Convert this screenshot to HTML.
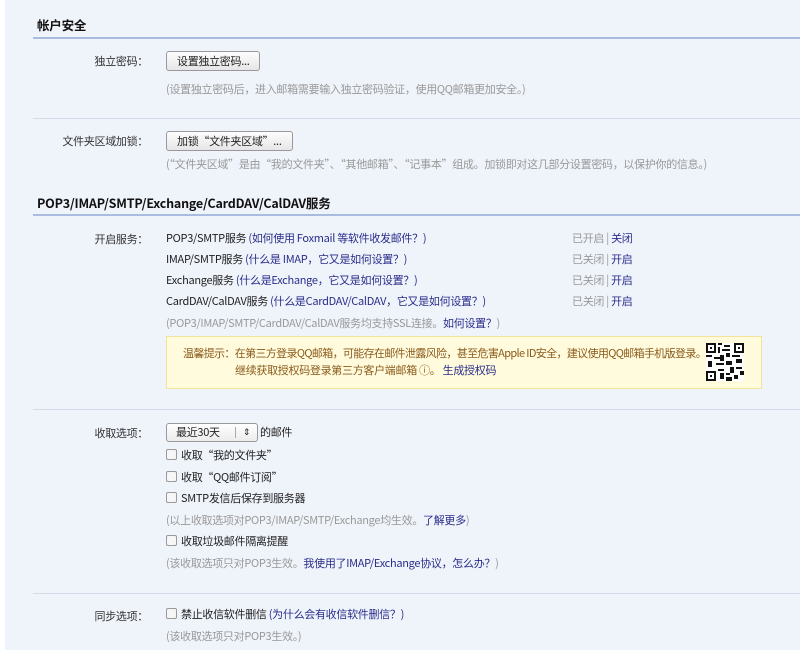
<!DOCTYPE html>
<html><head><meta charset="utf-8"><style>
*{margin:0;padding:0;box-sizing:border-box}
body{width:800px;height:650px;background:#eff3fa;font-family:"Noto Sans CJK SC","Liberation Sans",sans-serif;font-size:11px;letter-spacing:-0.3px;color:#222;position:relative;overflow:hidden}
.strip{position:absolute;left:0;top:0;width:5px;height:650px;background:#fff}
.a{position:absolute;white-space:nowrap;line-height:16px}
.h{font-weight:bold;font-size:12.5px;color:#111;letter-spacing:-0.2px}
.bl{position:absolute;left:33px;right:0;height:2px;background:#a9bce0}
.sep{position:absolute;left:33px;right:0;height:1px;background:#d3dbe8}
.lab{position:absolute;right:652px;white-space:nowrap;line-height:16px;color:#333}
.btn{position:absolute;left:166px;height:20px;border:1px solid #999;border-radius:3px;background:linear-gradient(#fdfdfd,#e6e6e6);line-height:18px;padding:0 10px;color:#222}
.g{color:#999}
.l{color:#2a2d8a}
.cb{display:inline-block;width:11px;height:11px;border:1px solid #999;border-radius:2px;background:#f6f6f6;vertical-align:-1px;margin-right:4px}
.st{position:absolute;left:572px;line-height:16px;white-space:nowrap}
</style></head><body>
<div class="strip"></div>
<div class="a h" style="left:37px;top:17px">帐户安全</div>
<div class="bl" style="top:37px"></div>
<div class="lab" style="top:53px">独立密码：</div>
<div class="btn" style="top:51px">设置独立密码...</div>
<div class="a g" style="left:166px;top:81px">(设置独立密码后，进入邮箱需要输入独立密码验证，使用QQ邮箱更加安全。)</div>
<div class="sep" style="top:118px"></div>
<div class="lab" style="top:133px">文件夹区域加锁：</div>
<div class="btn" style="top:131px">加锁“文件夹区域”...</div>
<div class="a g" style="left:166px;top:156px">(“文件夹区域”是由“我的文件夹”、“其他邮箱”、“记事本”组成。加锁即对这几部分设置密码，以保护你的信息。)</div>
<div class="a h" style="left:37px;top:195px">POP3/IMAP/SMTP/Exchange/CardDAV/CalDAV服务</div>
<div class="bl" style="top:214px"></div>
<div class="lab" style="top:231px">开启服务：</div>
<div class="a" style="left:166px;top:230px">POP3/SMTP服务 <span class="l">(如何使用 Foxmail 等软件收发邮件？)</span></div>
<div class="a" style="left:166px;top:251px">IMAP/SMTP服务 <span class="l">(什么是 IMAP，它又是如何设置？)</span></div>
<div class="a" style="left:166px;top:272px">Exchange服务 <span class="l">(什么是Exchange，它又是如何设置？)</span></div>
<div class="a" style="left:166px;top:293px">CardDAV/CalDAV服务 <span class="l">(什么是CardDAV/CalDAV，它又是如何设置？)</span></div>
<div class="st" style="top:230px"><span class="g">已开启 | </span><span class="l">关闭</span></div>
<div class="st" style="top:251px"><span class="g">已关闭 | </span><span class="l">开启</span></div>
<div class="st" style="top:272px"><span class="g">已关闭 | </span><span class="l">开启</span></div>
<div class="st" style="top:293px"><span class="g">已关闭 | </span><span class="l">开启</span></div>
<div class="a g" style="left:166px;top:315px">(POP3/IMAP/SMTP/CardDAV/CalDAV服务均支持SSL连接。<span class="l">如何设置？</span>)</div>
<div style="position:absolute;left:166px;top:336px;width:596px;height:53px;background:#fffbdc;border:1px solid #f3e49a"></div>
<div class="a" style="left:183px;top:345px;color:#8a5a1c;letter-spacing:-0.65px">温馨提示：在第三方登录QQ邮箱，可能存在邮件泄露风险，甚至危害Apple ID安全，建议使用QQ邮箱手机版登录。</div>
<div class="a" style="left:235px;top:362px;color:#8a5a1c">继续获取授权码登录第三方客户端邮箱 ⓘ。 <span class="l">生成授权码</span></div>
<svg style="position:absolute;left:706px;top:343px" width="38" height="38" viewBox="0 0 19 19">
<rect width="19" height="19" fill="#fff"/>
<g fill="#111">
<rect x="0" y="0" width="5" height="5"/><rect x="14" y="0" width="5" height="5"/><rect x="0" y="14" width="5" height="5"/>
</g><g fill="#fff"><rect x="1" y="1" width="3" height="3"/><rect x="15" y="1" width="3" height="3"/><rect x="1" y="15" width="3" height="3"/></g>
<g fill="#111"><rect x="2" y="2" width="1" height="1"/><rect x="16" y="2" width="1" height="1"/><rect x="2" y="16" width="1" height="1"/>
<rect x="6" y="0" width="2" height="1"/><rect x="9" y="1" width="3" height="1"/><rect x="6" y="2" width="1" height="3"/><rect x="8" y="3" width="4" height="1"/><rect x="10" y="5" width="2" height="2"/>
<rect x="0" y="6" width="3" height="1"/><rect x="4" y="7" width="3" height="1"/><rect x="7" y="6" width="2" height="3"/><rect x="13" y="6" width="4" height="1"/><rect x="15" y="8" width="3" height="2"/>
<rect x="1" y="9" width="2" height="3"/><rect x="5" y="10" width="4" height="1"/><rect x="10" y="9" width="3" height="2"/><rect x="12" y="12" width="2" height="3"/><rect x="6" y="13" width="3" height="1"/>
<rect x="15" y="12" width="3" height="1"/><rect x="7" y="15" width="2" height="3"/><rect x="10" y="15" width="2" height="1"/><rect x="14" y="16" width="2" height="2"/><rect x="17" y="14" width="2" height="2"/><rect x="10" y="17" width="3" height="2"/>
</g></svg>
<div class="sep" style="top:409px"></div>
<div class="lab" style="top:425px">收取选项：</div>
<div style="position:absolute;left:166px;top:423px;width:92px;height:19px;border:1px solid #999;border-radius:3px;background:linear-gradient(#fff,#ececec);line-height:17px;padding-left:9px">最近30天<span style="position:absolute;left:68px;top:3px;width:1px;height:11px;background:#aaa"></span><span style="position:absolute;left:76px;top:-1px;font-size:9px">⇕</span></div>
<div class="a" style="left:260px;top:424px">的邮件</div>
<div class="a" style="left:166px;top:447px"><span class="cb"></span>收取“我的文件夹”</div>
<div class="a" style="left:166px;top:469px"><span class="cb"></span>收取“QQ邮件订阅”</div>
<div class="a" style="left:166px;top:490px"><span class="cb"></span>SMTP发信后保存到服务器</div>
<div class="a g" style="left:166px;top:512px">(以上收取选项对POP3/IMAP/SMTP/Exchange均生效。<span class="l">了解更多</span>)</div>
<div class="a" style="left:166px;top:533px"><span class="cb"></span>收取垃圾邮件隔离提醒</div>
<div class="a g" style="left:166px;top:555px">(该收取选项只对POP3生效。<span class="l">我使用了IMAP/Exchange协议，怎么办？</span>)</div>
<div class="sep" style="top:593px"></div>
<div class="lab" style="top:608px">同步选项：</div>
<div class="a" style="left:166px;top:606px"><span class="cb"></span>禁止收信软件删信 <span class="l">(为什么会有收信软件删信？)</span></div>
<div class="a g" style="left:166px;top:628px">(该收取选项只对POP3生效。)</div>
</body></html>
